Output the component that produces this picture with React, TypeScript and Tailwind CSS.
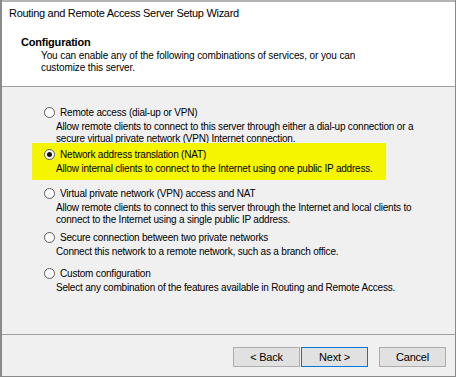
import React from "react";

type Option = {
  label: string;
  lines: string[];
  selected?: boolean;
  gap: string;
};

const options: Option[] = [
  {
    label: "Remote access (dial-up or VPN)",
    lines: [
      "Allow remote clients to connect to this server through either a dial-up connection or a",
      "secure virtual private network (VPN) Internet connection.",
    ],
    gap: "-mb-[2px]",
  },
  {
    label: "Network address translation (NAT)",
    lines: ["Allow internal clients to connect to the Internet using one public IP address."],
    selected: true,
    gap: "mb-[7px]",
  },
  {
    label: "Virtual private network (VPN) access and NAT",
    lines: [
      "Allow remote clients to connect to this server through the Internet and local clients to",
      "connect to the Internet using a single public IP address.",
    ],
    gap: "mb-[5px]",
  },
  {
    label: "Secure connection between two private networks",
    lines: ["Connect this network to a remote network, such as a branch office."],
    gap: "mb-[9px]",
  },
  {
    label: "Custom configuration",
    lines: ["Select any combination of the features available in Routing and Remote Access."],
    gap: "mb-0",
  },
];

const Radio: React.FC<{ checked?: boolean }> = ({ checked }) => (
  <div className="w-[11px] h-[11px] rounded-full border border-[#5a5a5a] bg-white flex items-center justify-center shrink-0">
    {checked && <div className="w-[5px] h-[5px] rounded-full bg-[#111]" />}
  </div>
);

const App: React.FC = () => {
  return (
    <div
      className="w-[456px] h-[377px] flex flex-col bg-[#f0f0f0] text-black text-[10px] tracking-[-0.2px] leading-[13px] border-l-2 border-r border-b border-[#8a8a8a] overflow-hidden"
      style={{ fontFamily: '"Liberation Sans", Arial, sans-serif' }}
    >
      {/* cropped strip of the window behind */}
      <div className="h-[2px] bg-[#b4b4b4]" />

      {/* header */}
      <div className="bg-white h-[85px] flex flex-col border-b border-[#a0a0a0]">
        <div className="pl-[7px] pt-[5px] text-[11px] tracking-[-0.3px]">
          Routing and Remote Access Server Setup Wizard
        </div>
        <div className="pl-[19px] pt-[16px] text-[11px] font-bold tracking-[-0.2px]">Configuration</div>
        <div className="pl-[39px] pt-[1px] tracking-[-0.1px] leading-[12px]">
          <div>You can enable any of the following combinations of services, or you can</div>
          <div>customize this server.</div>
        </div>
      </div>

      {/* options */}
      <div className="flex-1 flex flex-col pt-[19px]">
        {options.map((o) => (
          <div
            key={o.label}
            className={`ml-[30px] w-[354px] pl-[12px] ${o.gap} ${o.selected ? "bg-[#f5f500] pt-[5px] pb-[5px]" : ""}`}
          >
            <div className="flex items-center gap-[5px] h-[13px]">
              <Radio checked={o.selected} />
              <span>{o.label}</span>
            </div>
            <div className="pl-[12px] pt-[2px] leading-[12px]">
              {o.lines.map((l) => (
                <div key={l} className="whitespace-nowrap">
                  {l}
                </div>
              ))}
            </div>
          </div>
        ))}
      </div>

      {/* footer */}
      <div className="h-[42px] border-t border-[#a0a0a0] flex items-start justify-end pt-[12px] pr-[9px] text-[11px]">
        <button className="w-[67px] h-[20px] bg-[#e1e1e1] border border-[#adadad]">&lt; Back</button>
        <button className="w-[67px] h-[20px] ml-[1px] bg-[#e1e1e1] border border-[#0078d7]">Next &gt;</button>
        <button className="w-[67px] h-[20px] ml-[11px] bg-[#e1e1e1] border border-[#adadad]">Cancel</button>
      </div>
    </div>
  );
};

export default App;
